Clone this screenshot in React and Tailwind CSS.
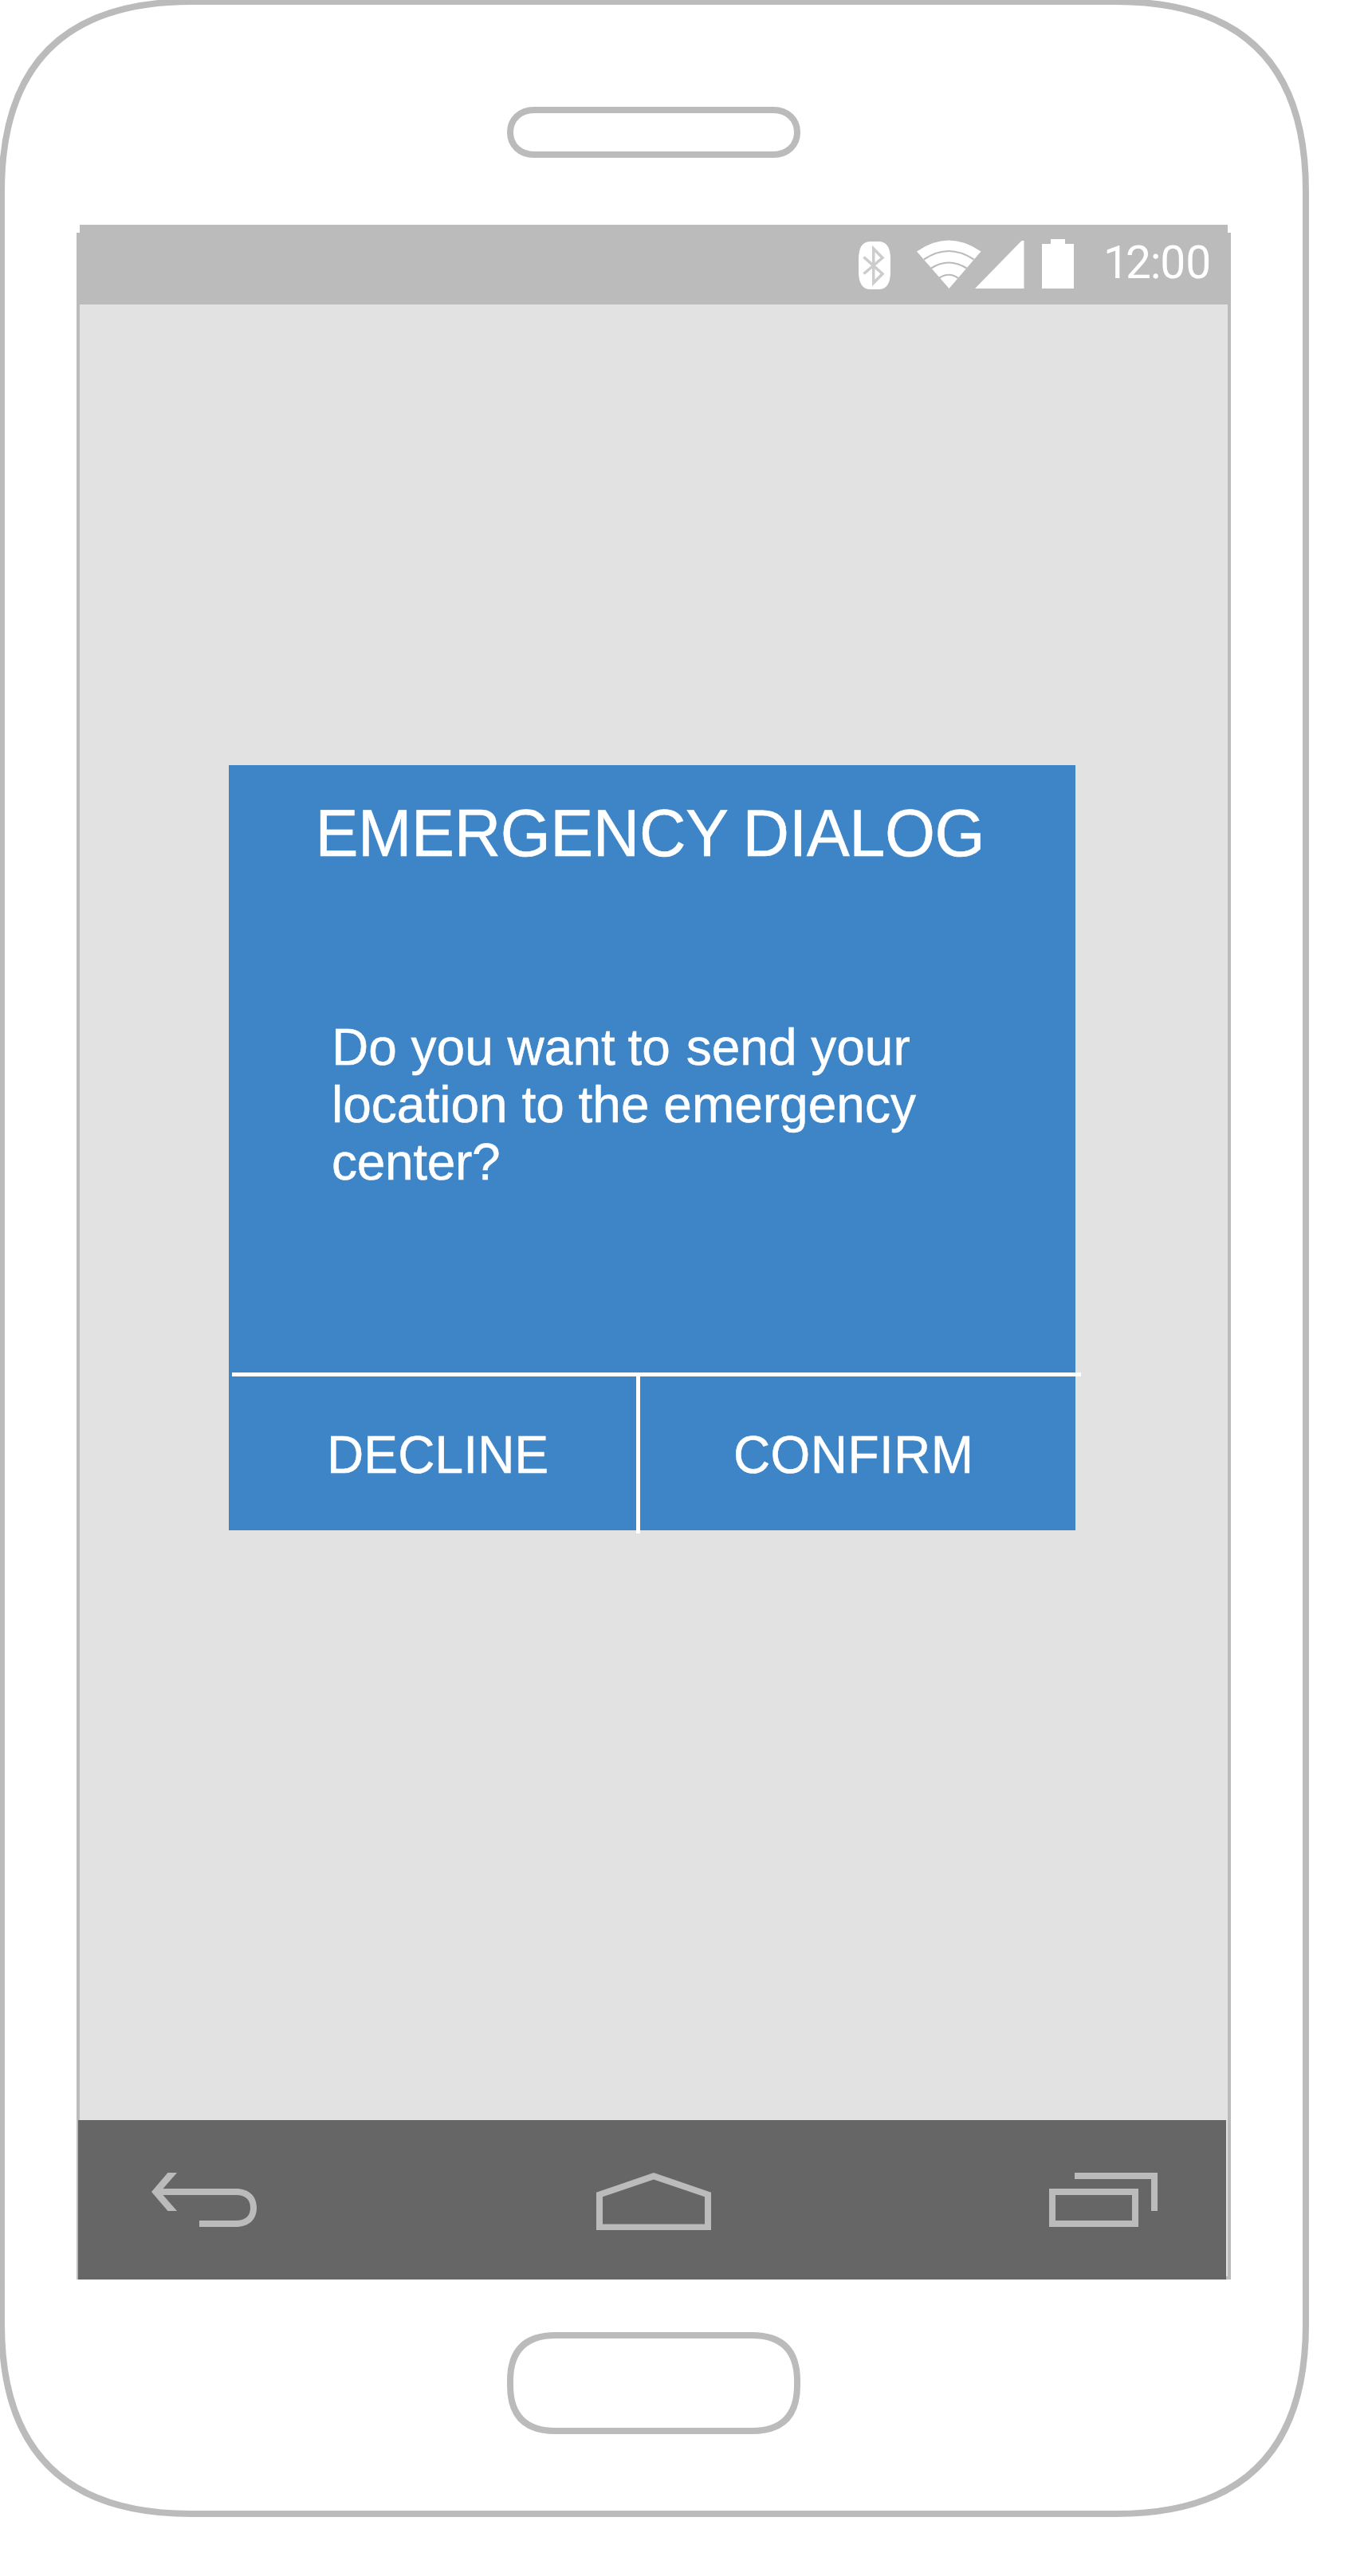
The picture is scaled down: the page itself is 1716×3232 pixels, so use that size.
const hardware =
  "M240 2H1400Q1638 2 1638 240V2916Q1638 3154 1400 3154H240Q2 3154 2 2916V240Q2 2 240 2Z " +
  "M670 138H970C988 138 1000 150 1000 166C1000 182 988 194 970 194H670C652 194 640 182 640 166C640 150 652 138 670 138Z " +
  "M697 2930H943Q1000 2930 1000 2987V2993Q1000 3050 943 3050H697Q640 3050 640 2993V2987Q640 2930 697 2930Z";

function StatusIcons() {
  return (
    <svg width="480" height="100" viewBox="1060 282 480 100" className="block shrink-0">
      <g fill="#fff">
        <path d="M1092 303H1102Q1117 303 1117 325V341Q1117 363 1102 363H1092Q1077 363 1077 341V325Q1077 303 1092 303Z" />
        <path d="M1150 315.500Q1190 287.500 1230.500 315.500L1190.500 362Z" />
        <path d="M1223 362L1281.500 302H1284.500V362Z" />
        <path d="M1307 306H1318V300H1336V306H1347V362H1307Z" />
      </g>
      <path d="M1083.500 322.500L1107 343.500L1095.700 355V312L1107 323.500L1083.500 343.500" fill="none" stroke="#ccc" strokeWidth="3.500" />
      <g fill="none" stroke="#bbb" strokeWidth="2.200">
        <path d="M1159 325.500Q1190 304.500 1221.500 325.500" />
        <path d="M1168 336.500Q1190 322.500 1212.500 336.500" />
        <path d="M1178 349Q1190 340.500 1202 349" />
      </g>
    </svg>
  );
}

function StatusBar() {
  return (
    <header className="relative ml-1 flex h-[100px] w-[1440px] shrink-0 justify-end bg-[#bbbbbb]">
      <StatusIcons />
      <span className="absolute top-[18px] left-[1284px] font-[Roboto,sans-serif] text-[57px] leading-[60px] whitespace-nowrap text-white">
        <span className="tracking-[-4px]">1</span>
        <span className="tracking-[-1.3px]">2:</span>00
      </span>
    </header>
  );
}

function Dialog() {
  return (
    <section className="ml-[187px] flex h-[960px] w-[1062px] flex-col bg-[#3e85c7] text-white [-webkit-text-stroke:0.5px_white]">
      <h1 className="mt-[38px] ml-[108.5px] h-[96px] origin-[0_76px] scale-y-[1.04] text-[81px] leading-[96px] tracking-[-0.45px] whitespace-nowrap [word-spacing:-2.5px]">
        EMERGENCY DIALOG
      </h1>
      <p className="mt-[184px] ml-[129px] h-[216px] text-[64px] leading-[72px] whitespace-nowrap">
        Do you want <span className="-ml-[2px] mr-[2px]">to</span> send your
        <br />
        location to the emergency
        <br />
        <span className="tracking-[-0.3px]">center?</span>
      </p>
      <div className="mt-auto ml-1 h-[5px] w-[1065px] shrink-0 bg-white" />
      <div className="flex h-[193px] w-[1062px] shrink-0">
        <button className="h-[193px] w-[511px] pt-[5px] pl-[123px] text-left text-[64px] tracking-[0.15px] whitespace-nowrap">
          <span className="inline-block origin-[0_70px] scale-y-[1.04]">DECLINE</span>
        </button>
        <div className="h-[197px] w-[5px] bg-white" />
        <button className="h-[193px] w-[546px] pt-[5px] pl-[117px] text-left text-[64px] tracking-[0.4px] whitespace-nowrap">
          <span className="inline-block origin-[0_70px] scale-y-[1.04]">CONFIRM</span>
        </button>
      </div>
    </section>
  );
}

function NavBar() {
  return (
    <nav className="ml-[2px] flex h-[200px] w-[1440px] shrink-0 items-center justify-between bg-[#666666] pr-[86px] pl-[92px]">
      <svg width="132" height="68" viewBox="0 0 132 68" className="block">
        <path d="M0 24L20.500 0H32L14.500 20H106C122 20 132 29 132 44C132 59 122 68 106 68H60V60H106C118 60 124 54 124 44C124 34 118 28 106 28H14.500L32 48H20.500Z" fill="#bbb" />
      </svg>
      <svg width="144" height="72" viewBox="0 0 144 72" className="mt-[4px] ml-[2px] block">
        <path fillRule="evenodd" d="M0 24.700L72 0L144 24.700V72H0Z M8 30.300V64.500H136V30.300L72 8.500Z" fill="#bbb" />
      </svg>
      <svg width="136" height="68" viewBox="0 0 136 68" className="block">
        <path fillRule="evenodd" d="M0 20H112V68H0Z M8 28V60H104V28Z M32 0H136V48H128V8H32Z" fill="#bbb" />
      </svg>
    </nav>
  );
}

export default function App() {
  return (
    <main className="relative h-[3232px] w-[1716px] overflow-hidden bg-white pt-[282px] pl-[96px] font-['Liberation_Sans',Arial,sans-serif]">
      <svg width="1716" height="3232" viewBox="0 0 1716 3232" className="pointer-events-none absolute inset-0">
        <path d={hardware} fill="none" stroke="#bbb" strokeWidth="8" />
      </svg>
      <div className="flex w-[1448px] flex-col">
        <StatusBar />
        <div className="-mt-[90px] h-[2568px] border-4 border-[#bbbbbb] bg-[#e2e2e2] pt-[664px]">
          <Dialog />
        </div>
        <div className="relative -mt-[200px]">
          <NavBar />
        </div>
      </div>
    </main>
  );
}
